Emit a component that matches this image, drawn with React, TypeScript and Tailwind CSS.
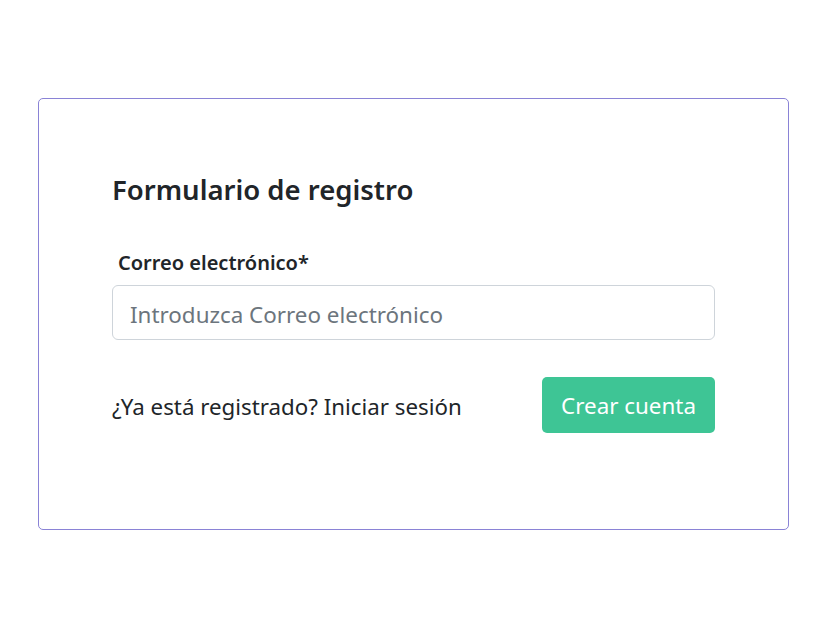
export default function App() {
  return (
    <div className="min-h-[617px] w-full bg-white pt-[98px] px-[38px]" style={{ fontFamily: '"Noto Sans", "Open Sans", sans-serif' }}>
      <div className="w-[751px] h-[432px] rounded-[5px] border border-[#8a83d6] bg-white px-[73px] pt-[73px]">
        <h1 className="text-[27.5px] leading-[36px] font-semibold text-[#212529]">Formulario de registro</h1>

        <form className="mt-[43px]" onSubmit={(e) => e.preventDefault()}>
          <label htmlFor="email" className="block pl-[6px] text-[20px] leading-[24px] font-semibold text-[#212529]">
            Correo electrónico*
          </label>
          <input
            id="email"
            type="email"
            placeholder="Introduzca Correo electrónico"
            className="mt-[10px] block w-full h-[55px] rounded-[6px] border border-[#ced4da] px-[17px] pt-[3px] text-[22.4px] text-[#212529] placeholder:text-[#6c757d] outline-none"
          />

          <div className="mt-[37px] flex items-center justify-between">
            <p className="pt-[3px] text-[22.3px] text-[#212529]">¿Ya está registrado? Iniciar sesión</p>
            <button
              type="submit"
              className="h-[56px] w-[173px] rounded-[5px] bg-[#3ec595] pt-[1px] text-[22.4px] text-white"
            >
              Crear cuenta
            </button>
          </div>
        </form>
      </div>
    </div>
  )
}
